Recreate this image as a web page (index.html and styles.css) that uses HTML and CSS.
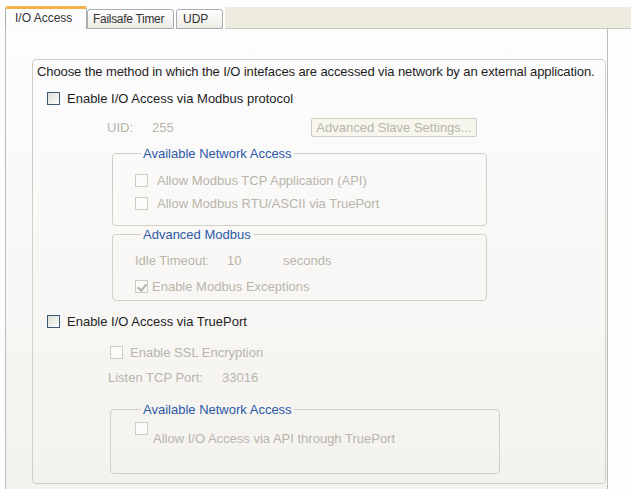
FILE: index.html
```html
<!DOCTYPE html>
<html lang="en">
<head>
  <meta charset="UTF-8" />
  <title>I/O Access</title>
  <link rel="stylesheet" href="styles.css">
</head>
<body>

<div class="tabs">
  <div class="tab active">I/O Access</div>
  <div class="tab tab-fs">Failsafe Timer</div>
  <div class="tab tab-udp">UDP</div>
  <div class="tab-fill"></div>
</div>

<div class="pane">
  <div class="outer">
    <p class="row intro">Choose the method in which the I/O inteface​s are accessed via network by an external application.</p>

    <label class="row modbus"><span class="cb"></span>Enable I/O Access via Modbus protocol</label>

    <div class="row uid dis">
      <span class="lbl-uid">UID:</span>
      <span class="val-uid">255</span>
      <span class="btn">Advanced Slave Settings...</span>
    </div>

    <fieldset class="grp g1">
      <legend>Available Network Access</legend>
      <label class="row dis"><span class="cb off"></span>Allow Modbus TCP Application (API)</label>
      <label class="row dis next"><span class="cb off"></span>Allow Modbus RTU/ASCII via TruePort</label>
    </fieldset>

    <fieldset class="grp g2">
      <legend>Advanced Modbus</legend>
      <div class="row dis">
        <span class="lbl-idle">Idle Timeout:</span>
        <span class="val-idle">10</span>
        <span>seconds</span>
      </div>
      <label class="row dis next exc"><span class="cb off checked"></span>Enable Modbus Exceptions</label>
    </fieldset>

    <label class="row trueport"><span class="cb"></span>Enable I/O Access via TruePort</label>

    <label class="row dis ssl"><span class="cb off"></span>Enable SSL Encryption</label>

    <div class="row dis listen">
      <span class="lbl-port">Listen TCP Port:</span>
      <span>33016</span>
    </div>

    <fieldset class="grp g3">
      <legend>Available Network Access</legend>
      <label class="row dis api"><span class="cb off"></span><span class="api-text">Allow I/O Access via API through TruePort</span></label>
    </fieldset>
  </div>
</div>

</body>
</html>
```

FILE: styles.css
```css
* { margin: 0; padding: 0; box-sizing: border-box; }
body {
  font-family: "Liberation Sans", Arial, sans-serif;
  font-size: 13px;
  color: #1e1e1e;
  background: #fdfdfd;
  width: 631px;
  height: 489px;
  overflow: hidden;
}

/* tab strip */
.tabs {
  display: flex;
  align-items: flex-end;
  height: 29px;
  padding-left: 5px;
  padding-top: 6px;
}
.tab {
  height: 20px;
  line-height: 18px;
  font-size: 12px;
  padding: 0 5px;
  border: 1px solid #a7aeae;
  border-radius: 3px 3px 0 0;
  background: linear-gradient(#ffffff, #ecebe4);
  color: #333;
  margin-right: 2px;
  white-space: nowrap;
  flex: none;
}
.tab.active {
  height: 23px;
  width: 82px;
  padding-left: 9px;
  line-height: 19px;
  background: #fcfcfe;
  border-top: 3px solid #f3b248;
  border-bottom: none;
  margin-right: 0;
}
.tab-fs { width: 87px; padding-left: 5px; padding-right: 0; letter-spacing: -0.3px; }
.tab-udp { width: 47px; padding-left: 6px; }
.tab-fill {
  flex: 1;
  height: 22px;
  background: #ecebdd;
  border-bottom: 1px solid #c9c8bc;
}

/* pane */
.pane {
  margin-left: 5px;
  width: 603px;
  height: 460px;
  border-left: 1px solid #b8bcbc;
  border-right: 1px solid #b8bcbc;
  background: linear-gradient(#fdfdfe, #f4f2ee);
  padding: 30px 0 0 26px;
}
.outer {
  width: 574px;
  height: 425px;
  border: 1px solid #d2d0c6;
  border-radius: 4px;
  padding: 4px 0 0 4px;
}

.row {
  display: flex;
  align-items: center;
  height: 15px;
  line-height: 15px;
  white-space: nowrap;
}
.dis { color: #b8b5aa; }

.cb {
  width: 13px;
  height: 13px;
  border: 1px solid #3c5a7a;
  background: linear-gradient(135deg, #dcdcd6, #ffffff);
  margin-right: 7px;
  flex: none;
  position: relative;
}
.cb.off {
  border-color: #cfcdc2;
  background: #fbfbf9;
  margin-right: 9px;
}
.cb.checked::after {
  content: "";
  position: absolute;
  left: 3px;
  top: 1px;
  width: 4px;
  height: 7px;
  border: solid #b4b1a6;
  border-width: 0 2px 2px 0;
  transform: rotate(40deg);
}

.intro { letter-spacing: -0.1px; }
.modbus { margin: 12px 0 0 10px; }

.uid { margin-top: 12px; height: 19px; }
.lbl-uid { margin-left: 70px; width: 45px; }
.val-uid { width: 159px; }
.btn {
  width: 166px;
  height: 19px;
  line-height: 17px;
  text-align: center;
  border: 1px solid #d1cfc3;
  border-radius: 2px;
  background: #f6f5ee;
}

.grp {
  border: 1px solid #d2d0c6;
  border-radius: 4px;
  margin-left: 75px;
  width: 375px;
  padding: 12px 0 14px 22px;
}
.grp legend {
  color: #2c58a6;
  line-height: 15px;
  padding: 0 2px;
  margin-left: 6px;
}
.g1 { margin-top: 9px; }
.next { margin-top: 8px; }

.g2 { margin-top: 1px; padding-top: 11px; padding-bottom: 6px; }
.lbl-idle { width: 92px; }
.val-idle { width: 56px; }
.g2 .next { margin-top: 11px; }
.exc .cb { margin-right: 4px; }

.trueport { margin: 13px 0 0 10px; }
.ssl { margin: 16px 0 0 73px; }
.ssl .cb { margin-right: 7px; }
.listen { margin: 10px 0 0 71px; }
.lbl-port { width: 114px; }

.g3 {
  margin: 17px 0 0 73px;
  width: 390px;
  height: 72px;
  padding: 5px 0 0 24px;
}
.api { align-items: flex-start; height: 24px; }
.api .cb { margin-right: 5px; }
.api-text { margin-top: 9px; }
```
